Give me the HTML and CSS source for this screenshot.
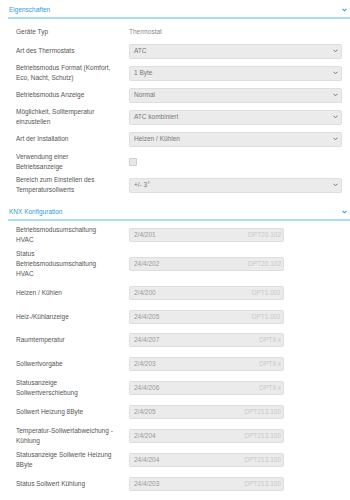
FILE: index.html
```html
<!DOCTYPE html>
<html lang="de">
<head>
<meta charset="utf-8">
<title>Thermostat</title>
<link rel="stylesheet" href="styles.css">
</head>
<body>
<section class="panel props">
  <div class="panel-head"><span>Eigenschaften</span><svg class="chev-blue" width="5" height="4" viewBox="0 0 5 4"><polyline points="0.6,0.8 2.5,2.8 4.4,0.8" fill="none" stroke="#2d9cdb" stroke-width="1.1"/></svg></div>
  <div class="rows">
    <div class="row row-static"><div class="label">Geräte Typ</div><div class="value">Thermostat</div></div>
    <div class="row"><div class="label">Art des Thermostats</div><div class="select"><span>ATC</span><svg width="5" height="4" viewBox="0 0 5 4"><polyline points="0.6,0.8 2.5,2.8 4.4,0.8" fill="none" stroke="#777" stroke-width="1"/></svg></div></div>
    <div class="row"><div class="label">Betriebsmodus Format (Komfort, Eco, Nacht, Schutz)</div><div class="select"><span>1 Byte</span><svg width="5" height="4" viewBox="0 0 5 4"><polyline points="0.6,0.8 2.5,2.8 4.4,0.8" fill="none" stroke="#777" stroke-width="1"/></svg></div></div>
    <div class="row"><div class="label">Betriebsmodus Anzeige</div><div class="select"><span>Normal</span><svg width="5" height="4" viewBox="0 0 5 4"><polyline points="0.6,0.8 2.5,2.8 4.4,0.8" fill="none" stroke="#777" stroke-width="1"/></svg></div></div>
    <div class="row"><div class="label">Möglichkeit, Solltemperatur einzustellen</div><div class="select"><span>ATC kombiniert</span><svg width="5" height="4" viewBox="0 0 5 4"><polyline points="0.6,0.8 2.5,2.8 4.4,0.8" fill="none" stroke="#777" stroke-width="1"/></svg></div></div>
    <div class="row"><div class="label">Art der Installation</div><div class="select"><span>Heizen / Kühlen</span><svg width="5" height="4" viewBox="0 0 5 4"><polyline points="0.6,0.8 2.5,2.8 4.4,0.8" fill="none" stroke="#777" stroke-width="1"/></svg></div></div>
    <div class="row row-check"><div class="label">Verwendung einer Betriebsanzeige</div><div class="checkbox"></div></div>
    <div class="row"><div class="label">Bereich zum Einstellen des Temperatursollwerts</div><div class="select"><span>+/- 3°</span><svg width="5" height="4" viewBox="0 0 5 4"><polyline points="0.6,0.8 2.5,2.8 4.4,0.8" fill="none" stroke="#777" stroke-width="1"/></svg></div></div>
  </div>
</section>
<section class="panel knx">
  <div class="panel-head"><span>KNX Konfiguration</span><svg class="chev-blue" width="5" height="4" viewBox="0 0 5 4"><polyline points="0.6,0.8 2.5,2.8 4.4,0.8" fill="none" stroke="#2d9cdb" stroke-width="1.1"/></svg></div>
  <div class="rows">
    <div class="row"><div class="label">Betriebsmodusumschaltung HVAC</div><div class="input"><span>2/4/201</span><span class="dpt">DPT20.102</span></div></div>
    <div class="row"><div class="label">Status Betriebsmodusumschaltung HVAC</div><div class="input"><span>24/4/202</span><span class="dpt">DPT20.102</span></div></div>
    <div class="row"><div class="label">Heizen / Kühlen</div><div class="input"><span>2/4/200</span><span class="dpt">DPT1.001</span></div></div>
    <div class="row"><div class="label">Heiz-/Kühlanzeige</div><div class="input"><span>24/4/205</span><span class="dpt">DPT1.001</span></div></div>
    <div class="row"><div class="label">Raumtemperatur</div><div class="input"><span>24/4/207</span><span class="dpt">DPT9.x</span></div></div>
    <div class="row"><div class="label">Sollwertvorgabe</div><div class="input"><span>2/4/203</span><span class="dpt">DPT9.x</span></div></div>
    <div class="row"><div class="label">Statusanzeige Sollwertverschiebung</div><div class="input"><span>24/4/206</span><span class="dpt">DPT9.x</span></div></div>
    <div class="row"><div class="label">Sollwert Heizung 8Byte</div><div class="input"><span>2/4/205</span><span class="dpt">DPT213.100</span></div></div>
    <div class="row"><div class="label">Temperatur-Sollwertabweichung - Kühlung</div><div class="input"><span>2/4/204</span><span class="dpt">DPT213.100</span></div></div>
    <div class="row"><div class="label">Statusanzeige Sollwerte Heizung 8Byte</div><div class="input"><span>24/4/204</span><span class="dpt">DPT213.100</span></div></div>
    <div class="row"><div class="label">Status Sollwert Kühlung</div><div class="input"><span>24/4/203</span><span class="dpt">DPT213.100</span></div></div>
  </div>
</section>
</body>
</html>
```
FILE: styles.css
```css
* { box-sizing: border-box; }

body {
  margin: 0;
  background: #fff;
  font-family: "Liberation Sans", Arial, sans-serif;
  font-size: 6.5px;
  line-height: 10px;
  color: #555;
}

.panel {
  margin-left: 8px;
}

.panel + .panel {
  margin-top: 6px;
}

.panel-head {
  display: flex;
  align-items: center;
  justify-content: space-between;
  height: 19px;
  padding: 5px 3px 2px 1px;
  border-bottom: 2px solid #a8def0;
  color: #2d9cdb;
}

.chev-blue {
  display: block;
}

.props .rows {
  padding-top: 5px;
}

.knx .rows {
  padding-top: 2px;
}

.row {
  display: flex;
  align-items: center;
  min-height: 22px;
  padding-left: 8px;
}

.row-static {
  min-height: 16px;
}

.row-check {
  min-height: 24px;
}

.knx .row {
  min-height: 23.75px;
  padding-top: 2px;
  padding-bottom: 2px;
}

.label {
  flex: none;
  width: 113px;
  padding-right: 14px;
}

.value {
  color: #8a8a8a;
}

.select {
  display: flex;
  align-items: center;
  justify-content: space-between;
  width: 213px;
  height: 15px;
  padding: 0 3px 0 4px;
  background: #ebebeb;
  border: 1px solid #dedede;
  border-radius: 2px;
  color: #777;
}

.select svg {
  display: block;
}

.checkbox {
  width: 8px;
  height: 8px;
  background: #e8e8e8;
  border: 1px solid #cfcfcf;
  border-radius: 1px;
}

.input {
  display: flex;
  align-items: center;
  justify-content: space-between;
  width: 155px;
  height: 14px;
  padding: 0 2px 0 4px;
  background: #ebebeb;
  border: 1px solid #dedede;
  border-radius: 2px;
  color: #9a9a9a;
}

.dpt {
  color: #c9c9c9;
}
```
